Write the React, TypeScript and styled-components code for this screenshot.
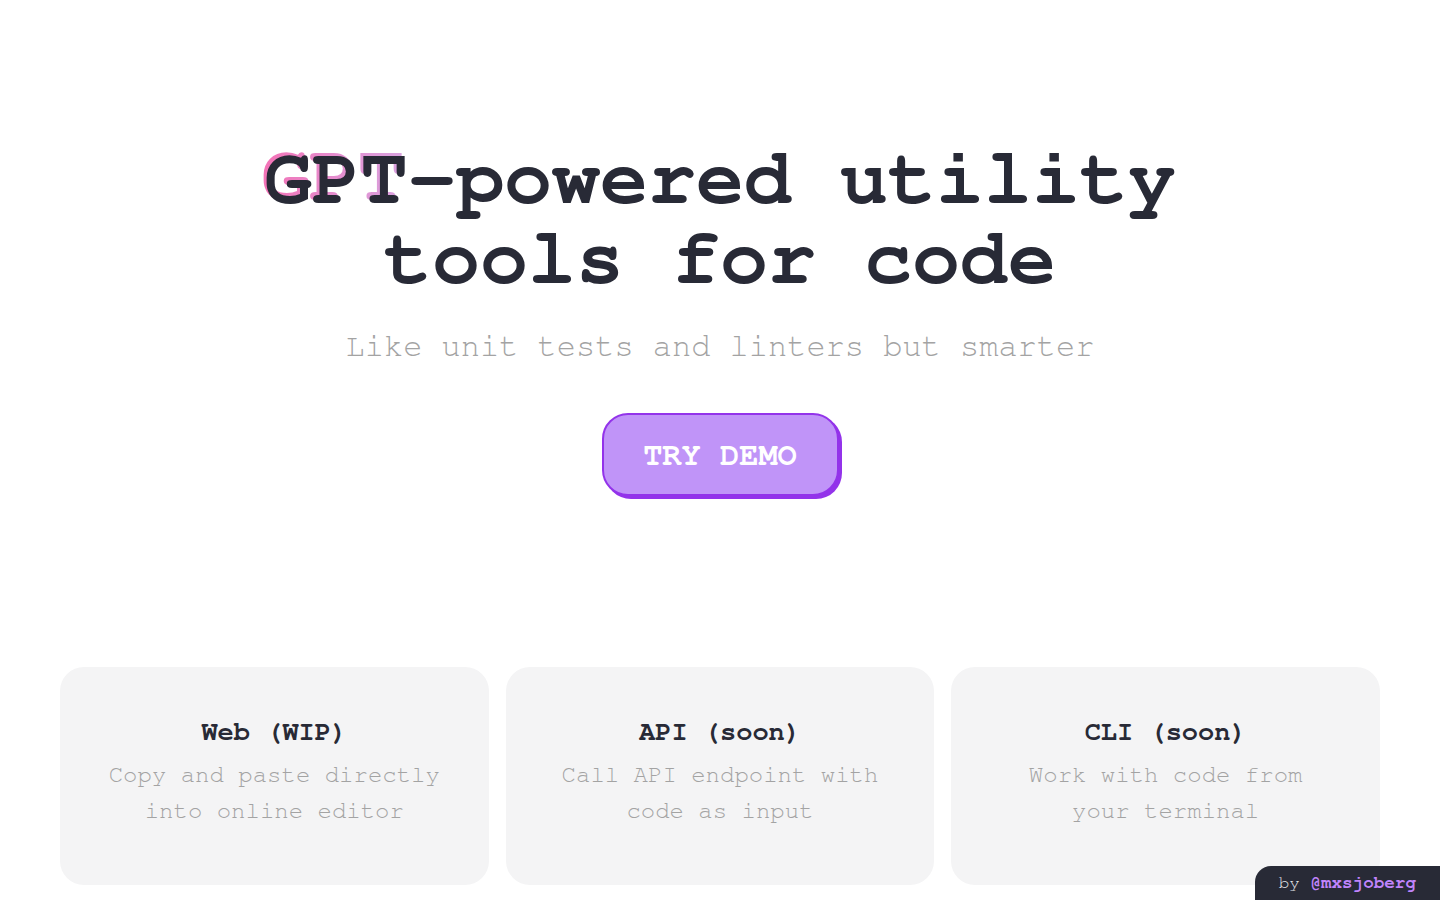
import React from 'react';
import styled, { createGlobalStyle } from 'styled-components';

const mono = `"Nimbus Mono PS", "Nimbus Mono L", FreeMono, "Liberation Mono", "Courier New", monospace`;

const GlobalStyle = createGlobalStyle`
  * { box-sizing: border-box; }
  html, body {
    margin: 0;
    padding: 0;
    background: #ffffff;
    font-family: ${mono};
    color: #282a36;
  }
`;

const Page = styled.div`
  height: 100vh;
  display: flex;
  flex-direction: column;
  align-items: center;
  padding: 0 60px 15px;
`;

const Hero = styled.section`
  flex: 1;
  display: flex;
  flex-direction: column;
  align-items: center;
  padding-top: 139px;
`;

const Title = styled.h1`
  margin: 0;
  font-size: 80px;
  line-height: 80px;
  font-weight: 700;
  text-align: center;
  color: #282a36;
`;

const Glow = styled.span`
  position: relative;
  display: inline-block;
  z-index: 0;

  &::before {
    content: 'GPT';
    position: absolute;
    left: -3px;
    top: -3px;
    z-index: -1;
    background: linear-gradient(90deg, #f472b6 0%, #e48fd0 55%, #d9a3e0 100%);
    -webkit-background-clip: text;
    background-clip: text;
    color: transparent;
  }
`;

const Subtitle = styled.p`
  margin: 27px 0 0;
  font-size: 32px;
  line-height: 40px;
  color: #a3a3a3;
`;

const DemoButton = styled.button`
  margin-top: 47px;
  width: 237px;
  height: 83px;
  border-radius: 26px;
  border: 2px solid #9333ea;
  background: #c094f8;
  box-shadow: 3px 3px 0 #9333ea;
  color: #ffffff;
  font-family: ${mono};
  font-size: 32px;
  font-weight: 700;
  cursor: pointer;
`;

const Cards = styled.div`
  width: 100%;
  display: grid;
  grid-template-columns: repeat(3, 1fr);
  gap: 17px;
`;

const Card = styled.div`
  height: 218px;
  border-radius: 24px;
  background: #f4f4f5;
  display: flex;
  flex-direction: column;
  align-items: center;
  padding-top: 48px;
  text-align: center;
`;

const CardTitle = styled.h2`
  margin: 0;
  font-size: 27px;
  line-height: 34px;
  font-weight: 700;
  color: #282a36;
`;

const CardText = styled.p`
  margin: 8px 0 0;
  font-size: 24px;
  line-height: 36px;
  color: #a3a3a3;
`;

const Credit = styled.div`
  position: fixed;
  right: 0;
  bottom: 0;
  height: 34px;
  padding: 0 24px;
  display: flex;
  align-items: center;
  background: #282a36;
  border-top-left-radius: 16px;
  font-size: 17.6px;
  color: #e5e7eb;
`;

const Handle = styled.span`
  font-weight: 700;
  color: #c084fc;
`;

const cards = [
  { title: 'Web (WIP)', lines: ['Copy and paste directly', 'into online editor'] },
  { title: 'API (soon)', lines: ['Call API endpoint with', 'code as input'] },
  { title: 'CLI (soon)', lines: ['Work with code from', 'your terminal'] },
];

const App: React.FC = () => {
  return (
    <>
      <GlobalStyle />
      <Page>
        <Hero>
          <Title>
            <Glow>GPT</Glow>-powered utility
            <br />
            tools for code
          </Title>
          <Subtitle>Like unit tests and linters but smarter</Subtitle>
          <DemoButton>TRY DEMO</DemoButton>
        </Hero>
        <Cards>
          {cards.map((card) => (
            <Card key={card.title}>
              <CardTitle>{card.title}</CardTitle>
              <CardText>
                {card.lines[0]}
                <br />
                {card.lines[1]}
              </CardText>
            </Card>
          ))}
        </Cards>
      </Page>
      <Credit>
        by&nbsp;<Handle>@mxsjoberg</Handle>
      </Credit>
    </>
  );
};

export default App;
